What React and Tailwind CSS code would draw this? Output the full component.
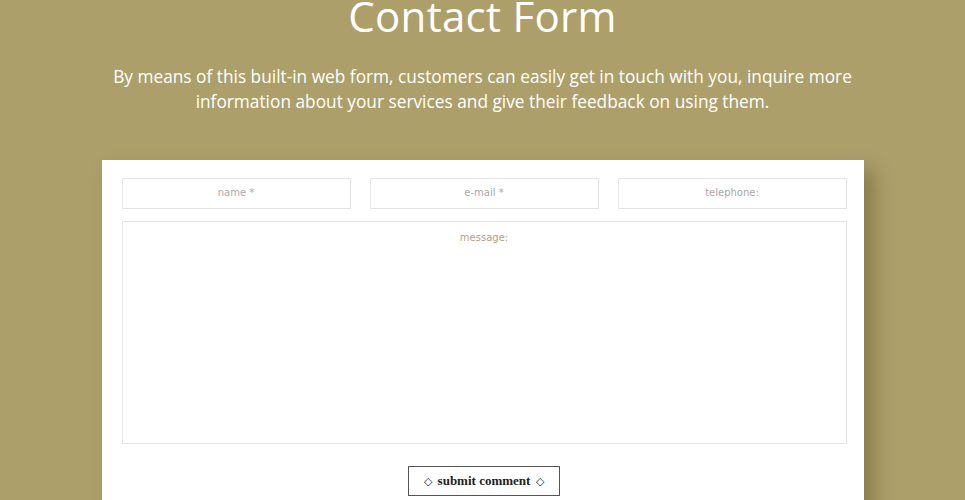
import React from 'react';

const Field = ({ label }) => (
  <div className="flex-1 h-[31px] border border-[#e3e3e3] flex items-center justify-center">
    <span className="text-[10px] text-[#a8a8a8] mb-[2px]" style={{ fontFamily: '"DejaVu Sans", sans-serif' }}>
      {label}
    </span>
  </div>
);

const App = () => {
  return (
    <div className="w-full h-[500px] overflow-hidden bg-[#ad9f6a] flex flex-col items-center" style={{ fontFamily: '"Open Sans", sans-serif' }}>
      {/* Heading */}
      <h1 className="mt-[-11px] text-[42px] leading-[54px] text-white font-normal tracking-[0.3px]">
        Contact Form
      </h1>
      <p className="mt-[21px] w-[770px] text-center text-[17.3px] leading-[25px] text-white">
        By means of this built-in web form, customers can easily get in touch with you, inquire more information about your services and give their feedback on using them.
      </p>

      {/* Form card */}
      <div className="mt-[46px] w-[762px] bg-white pt-[18px] pl-[20px] pr-[17px] pb-[20px] shadow-[10px_10px_18px_rgba(70,55,20,0.35)]">
        <div className="flex gap-[19px]">
          <Field label="name *" />
          <Field label="e-mail *" />
          <Field label="telephone:" />
        </div>
        <div className="mt-[12px] h-[223px] border border-[#e3e3e3] flex justify-center pt-[8px]">
          <span className="text-[10px] text-[#b59c86]" style={{ fontFamily: '"DejaVu Sans", sans-serif' }}>
            message:
          </span>
        </div>
        <div className="mt-[22px] flex justify-center">
          <button className="h-[30px] w-[152px] border border-[#555] flex items-center justify-center gap-[6px] text-[13px] font-bold text-[#222]" style={{ fontFamily: '"Liberation Serif", serif' }}>
            <span className="text-[11px] font-normal">◇</span>
            <span>submit comment</span>
            <span className="text-[11px] font-normal">◇</span>
          </button>
        </div>
      </div>
    </div>
  );
};

export default App;
